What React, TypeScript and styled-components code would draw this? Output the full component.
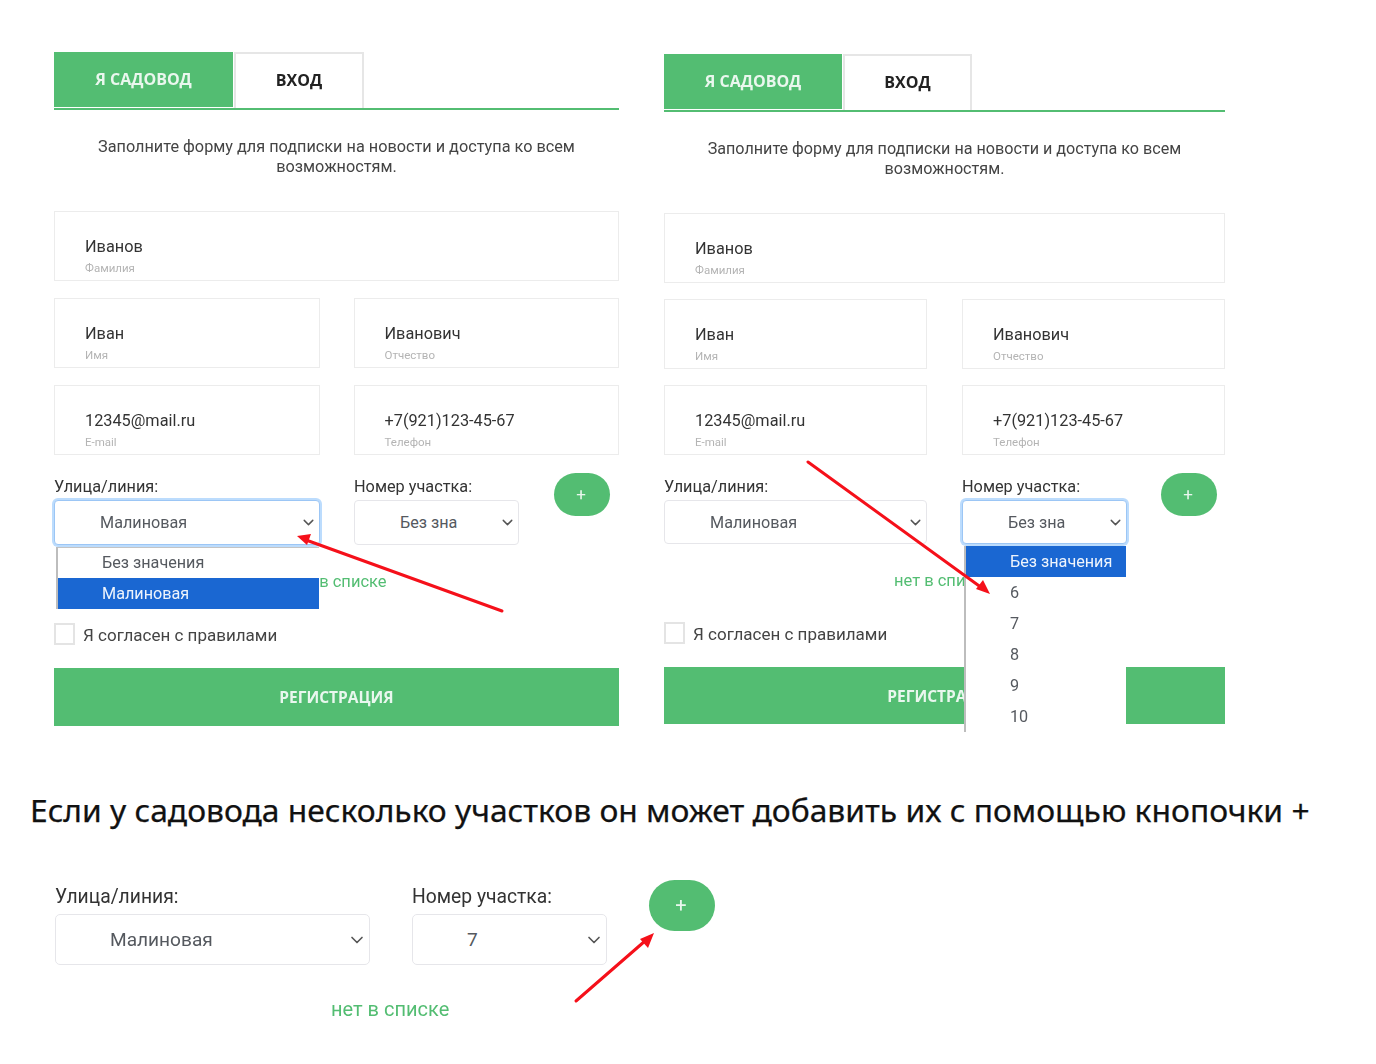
import React from 'react'
import { ChevronDown } from 'lucide-react'
import { createGlobalStyle, styled } from 'styled-components'

const GREEN = '#53bd72'
const BLUE = '#1a67d2'

const GlobalStyle = createGlobalStyle`
  html, body {
    margin: 0;
    padding: 0;
    background: #fff;
  }
  body {
    font-family: Roboto, "Liberation Sans", sans-serif;
    color: #333;
  }
`

const Page = styled.div`
  position: relative;
  width: 1376px;
  height: 1064px;
  overflow: hidden;
  padding-top: 52px;
  box-sizing: border-box;
`

const FormsRow = styled.div`
  display: flex;
  align-items: flex-start;
  gap: 45px;
  padding-left: 54px;
  height: 736px;
`

const Form = styled.div<{ $width: number; $shift: number }>`
  width: ${(p) => p.$width}px;
  margin-top: ${(p) => p.$shift}px;
  filter: blur(0.4px);
`

const Tabs = styled.div`
  display: flex;
  height: 56px;
  border-bottom: 2px solid ${GREEN};
`

const TabActive = styled.div<{ $width: number }>`
  width: ${(p) => p.$width}px;
  height: 55px;
  background: ${GREEN};
  color: #eaf7ee;
  display: flex;
  align-items: center;
  justify-content: center;
  padding-bottom: 2px;
  box-sizing: border-box;
  font: 700 16px "Open Sans", sans-serif;
`

const TabIdle = styled.div<{ $width: number }>`
  width: ${(p) => p.$width}px;
  margin-left: 1px;
  padding-bottom: 2px;
  background: #fff;
  color: #222;
  border: 2px solid #e6e6e6;
  border-bottom: 0;
  display: flex;
  align-items: center;
  justify-content: center;
  box-sizing: border-box;
  font: 700 16px "Open Sans", sans-serif;
`

const Intro = styled.p<{ $size: number }>`
  margin: 27px 0 34px;
  text-align: center;
  font-size: ${(p) => p.$size}px;
  line-height: 20px;
  color: #444;
`

const Fields = styled.div<{ $gap: number; $rowGap: number }>`
  display: grid;
  grid-template-columns: 1fr 1fr;
  column-gap: ${(p) => p.$gap}px;
  row-gap: ${(p) => p.$rowGap}px;
`

const Field = styled.div<{ $wide?: boolean }>`
  grid-column: ${(p) => (p.$wide ? '1 / 3' : 'auto')};
  height: 70px;
  border: 1px solid #ececec;
  box-sizing: border-box;
  padding: 25px 30px 0;
`

const FieldValue = styled.div`
  font-size: 16.3px;
  line-height: 20px;
  color: #333;
`

const FieldHint = styled.div`
  margin-top: 4px;
  font-size: 11.5px;
  line-height: 14px;
  color: #b4b4b4;
`

const SelectRow = styled.div<{ $gap: number; $top: number }>`
  display: flex;
  align-items: flex-start;
  gap: ${(p) => p.$gap}px;
  margin-top: ${(p) => p.$top}px;
`

const SelectColumn = styled.div<{ $width: number }>`
  width: ${(p) => p.$width}px;
  padding-top: 4px;
`

const SelectLabel = styled.div<{ $big?: boolean }>`
  padding-top: ${(p) => (p.$big ? 1 : 0)}px;
  font-size: ${(p) => (p.$big ? 19.3 : 16.3)}px;
  line-height: ${(p) => (p.$big ? 24 : 20)}px;
  color: #333;
`

const SelectBox = styled.div<{ $height: number; $open?: boolean; $big?: boolean }>`
  position: relative;
  height: ${(p) => p.$height}px;
  margin-top: ${(p) => (p.$big ? 5 : 3)}px;
  padding-left: ${(p) => (p.$big ? 54 : 45)}px;
  padding-right: 2px;
  display: flex;
  align-items: center;
  justify-content: space-between;
  box-sizing: border-box;
  background: #fff;
  border: 1px solid ${(p) => (p.$open ? '#9cc6f5' : '#e6e6ea')};
  border-radius: ${(p) => (p.$big ? 5 : 4)}px;
  box-shadow: ${(p) => (p.$open ? '0 0 0 2px #bcdcfd' : 'none')};
  font-size: ${(p) => (p.$big ? 19.1 : 16.2)}px;
  color: #55595f;
`

const Menu = styled.div<{ $height: number }>`
  position: absolute;
  z-index: 2;
  top: calc(100% + 3px);
  left: 1px;
  right: 0;
  height: ${(p) => p.$height}px;
  overflow: hidden;
  background: #fff;
  border-left: 2px solid #bdbdbd;
`

const MenuItem = styled.div<{ $selected?: boolean }>`
  height: 31px;
  line-height: 31px;
  padding-left: 44px;
  font-size: 16.2px;
  background: ${(p) => (p.$selected ? BLUE : 'transparent')};
  color: ${(p) => (p.$selected ? '#eef4fc' : '#55595f')};
`

const MenuTopLine = styled.div`
  height: 1px;
  background: #c4c4c4;
  margin-bottom: -1px;
`

const PlusButton = styled.div<{ $width: number; $height: number; $offset?: number; $big?: boolean }>`
  width: ${(p) => p.$width}px;
  height: ${(p) => p.$height}px;
  margin-left: ${(p) => p.$offset ?? 0}px;
  padding: 0 2px 2px 0;
  box-sizing: border-box;
  border-radius: ${(p) => p.$height / 2}px;
  background: ${GREEN};
  color: #e9f7ee;
  display: flex;
  align-items: center;
  justify-content: center;
  font-size: ${(p) => (p.$big ? 20 : 17)}px;
`

const Note = styled.div<{ $left: number; $top: number; $big?: boolean }>`
  margin: ${(p) => p.$top}px 0 0 ${(p) => p.$left}px;
  font-size: ${(p) => (p.$big ? 20 : 16.5)}px;
  line-height: 20px;
  color: ${GREEN};
`

const Agreement = styled.div`
  display: flex;
  align-items: center;
  gap: 8px;
  margin-top: 31px;
  font-size: 17px;
  color: #444;
`

const AgreementText = styled.span`
  padding-top: 2px;
`

const Checkbox = styled.div`
  width: 21px;
  height: 22px;
  border: 2px solid #e4e4e4;
  box-sizing: border-box;
`

const SubmitButton = styled.div<{ $height: number }>`
  height: ${(p) => p.$height}px;
  margin-top: 23px;
  background: ${GREEN};
  color: #e9f7ee;
  display: flex;
  align-items: center;
  justify-content: center;
  font: 700 15.5px "Open Sans", sans-serif;
`

const Heading = styled.h2`
  margin: 0 0 0 30px;
  font: 400 31.8px/44px "Noto Sans", sans-serif;
  -webkit-text-stroke: 0.25px #111;
  color: #111;
  white-space: nowrap;
`

const BottomBlock = styled.div`
  margin-top: 48px;
  margin-left: 55px;
  filter: blur(0.3px);
`

const Arrows = styled.svg`
  position: absolute;
  inset: 0;
  z-index: 5;
  pointer-events: none;
`

const Chevron = styled(ChevronDown)`
  flex: none;
  color: #555;
`

type MenuOptions = { height: number; items: string[]; selected: string }

type FormSelectProps = {
  label: string
  value: string
  width: number
  height: number
  menu?: MenuOptions
  big?: boolean
}

const FormSelect = ({ label, value, width, height, menu, big }: FormSelectProps) => (
  <SelectColumn $width={width}>
    <SelectLabel $big={big}>{label}</SelectLabel>
    <SelectBox $height={height} $open={!!menu} $big={big}>
      <span>{value}</span>
      <Chevron size={big ? 20 : 17} strokeWidth={2} />
      {menu && (
        <Menu $height={menu.height}>
          <MenuTopLine />
          {menu.items.map((item) => (
            <MenuItem key={item} $selected={item === menu.selected}>
              {item}
            </MenuItem>
          ))}
        </Menu>
      )}
    </SelectBox>
  </SelectColumn>
)

type RegistrationFormProps = {
  width: number
  shift: number
  firstTab: number
  secondTab: number
  introSize: number
  columnGap: number
  rowGap: number
  colWidth: number
  plusOffset: number
  selectHeight: number
  noteLeft: number
  submitHeight: number
  streetMenu?: MenuOptions
  numberMenu?: MenuOptions
}

const RegistrationForm = (p: RegistrationFormProps) => (
  <Form $width={p.width} $shift={p.shift}>
    <Tabs>
      <TabActive $width={p.firstTab}>Я САДОВОД</TabActive>
      <TabIdle $width={p.secondTab}>ВХОД</TabIdle>
    </Tabs>
    <Intro $size={p.introSize}>
      Заполните форму для подписки на новости и доступа ко всем
      <br />
      возможностям.
    </Intro>
    <Fields $gap={p.columnGap} $rowGap={p.rowGap}>
      <Field $wide>
        <FieldValue>Иванов</FieldValue>
        <FieldHint>Фамилия</FieldHint>
      </Field>
      <Field>
        <FieldValue>Иван</FieldValue>
        <FieldHint>Имя</FieldHint>
      </Field>
      <Field>
        <FieldValue>Иванович</FieldValue>
        <FieldHint>Отчество</FieldHint>
      </Field>
      <Field>
        <FieldValue>12345@mail.ru</FieldValue>
        <FieldHint>E-mail</FieldHint>
      </Field>
      <Field>
        <FieldValue>+7(921)123-45-67</FieldValue>
        <FieldHint>Телефон</FieldHint>
      </Field>
    </Fields>
    <SelectRow $gap={p.columnGap} $top={18}>
      <FormSelect
        label="Улица/линия:"
        value="Малиновая"
        width={p.colWidth}
        height={p.selectHeight}
        menu={p.streetMenu}
      />
      <FormSelect
        label="Номер участка:"
        value="Без зна"
        width={165}
        height={p.selectHeight}
        menu={p.numberMenu}
      />
      <PlusButton $width={56} $height={43} $offset={p.plusOffset}>
        +
      </PlusButton>
    </SelectRow>
    <Note $left={p.noteLeft} $top={27}>
      нет в списке
    </Note>
    <Agreement>
      <Checkbox />
      <AgreementText>Я согласен с правилами</AgreementText>
    </Agreement>
    <SubmitButton $height={p.submitHeight}>РЕГИСТРАЦИЯ</SubmitButton>
  </Form>
)

const App = () => (
  <Page>
    <GlobalStyle />
    <FormsRow>
      <RegistrationForm
        width={565}
        shift={0}
        firstTab={179}
        secondTab={130}
        introSize={16.25}
        columnGap={34}
        rowGap={17}
        colWidth={266}
        plusOffset={1}
        selectHeight={45}
        noteLeft={235}
        submitHeight={58}
        streetMenu={{ height: 62, items: ['Без значения', 'Малиновая'], selected: 'Малиновая' }}
      />
      <RegistrationForm
        width={561}
        shift={2}
        firstTab={178}
        secondTab={129}
        introSize={16.15}
        columnGap={35}
        rowGap={16}
        colWidth={263}
        plusOffset={-1}
        selectHeight={44}
        noteLeft={230}
        submitHeight={57}
        numberMenu={{
          height: 186,
          items: ['Без значения', '6', '7', '8', '9', '10'],
          selected: 'Без значения',
        }}
      />
    </FormsRow>
    <Heading>Если у садовода несколько участков он может добавить их с помощью кнопочки +</Heading>
    <BottomBlock>
      <SelectRow $gap={42} $top={0}>
        <FormSelect label="Улица/линия:" value="Малиновая" width={315} height={51} big />
        <FormSelect label="Номер участка:" value="7" width={195} height={51} big />
        <PlusButton $width={66} $height={51} $big>
          +
        </PlusButton>
      </SelectRow>
      <Note $left={276} $top={34} $big>
        нет в списке
      </Note>
    </BottomBlock>
    <Arrows width={1376} height={1064} viewBox="0 0 1376 1064">
      <g stroke="#f5101a" strokeWidth={3} strokeLinecap="round">
        <line x1={502} y1={611} x2={306} y2={540} />
        <line x1={808} y1={462} x2={982} y2={588} />
        <line x1={576} y1={1001} x2={645} y2={941} />
      </g>
      <g fill="#f5101a">
        <polygon points="297,536 311,534 307,545" />
        <polygon points="990,594 976,589 983,580" />
        <polygon points="654,933 648,948 640,939" />
      </g>
    </Arrows>
  </Page>
)

export default App
